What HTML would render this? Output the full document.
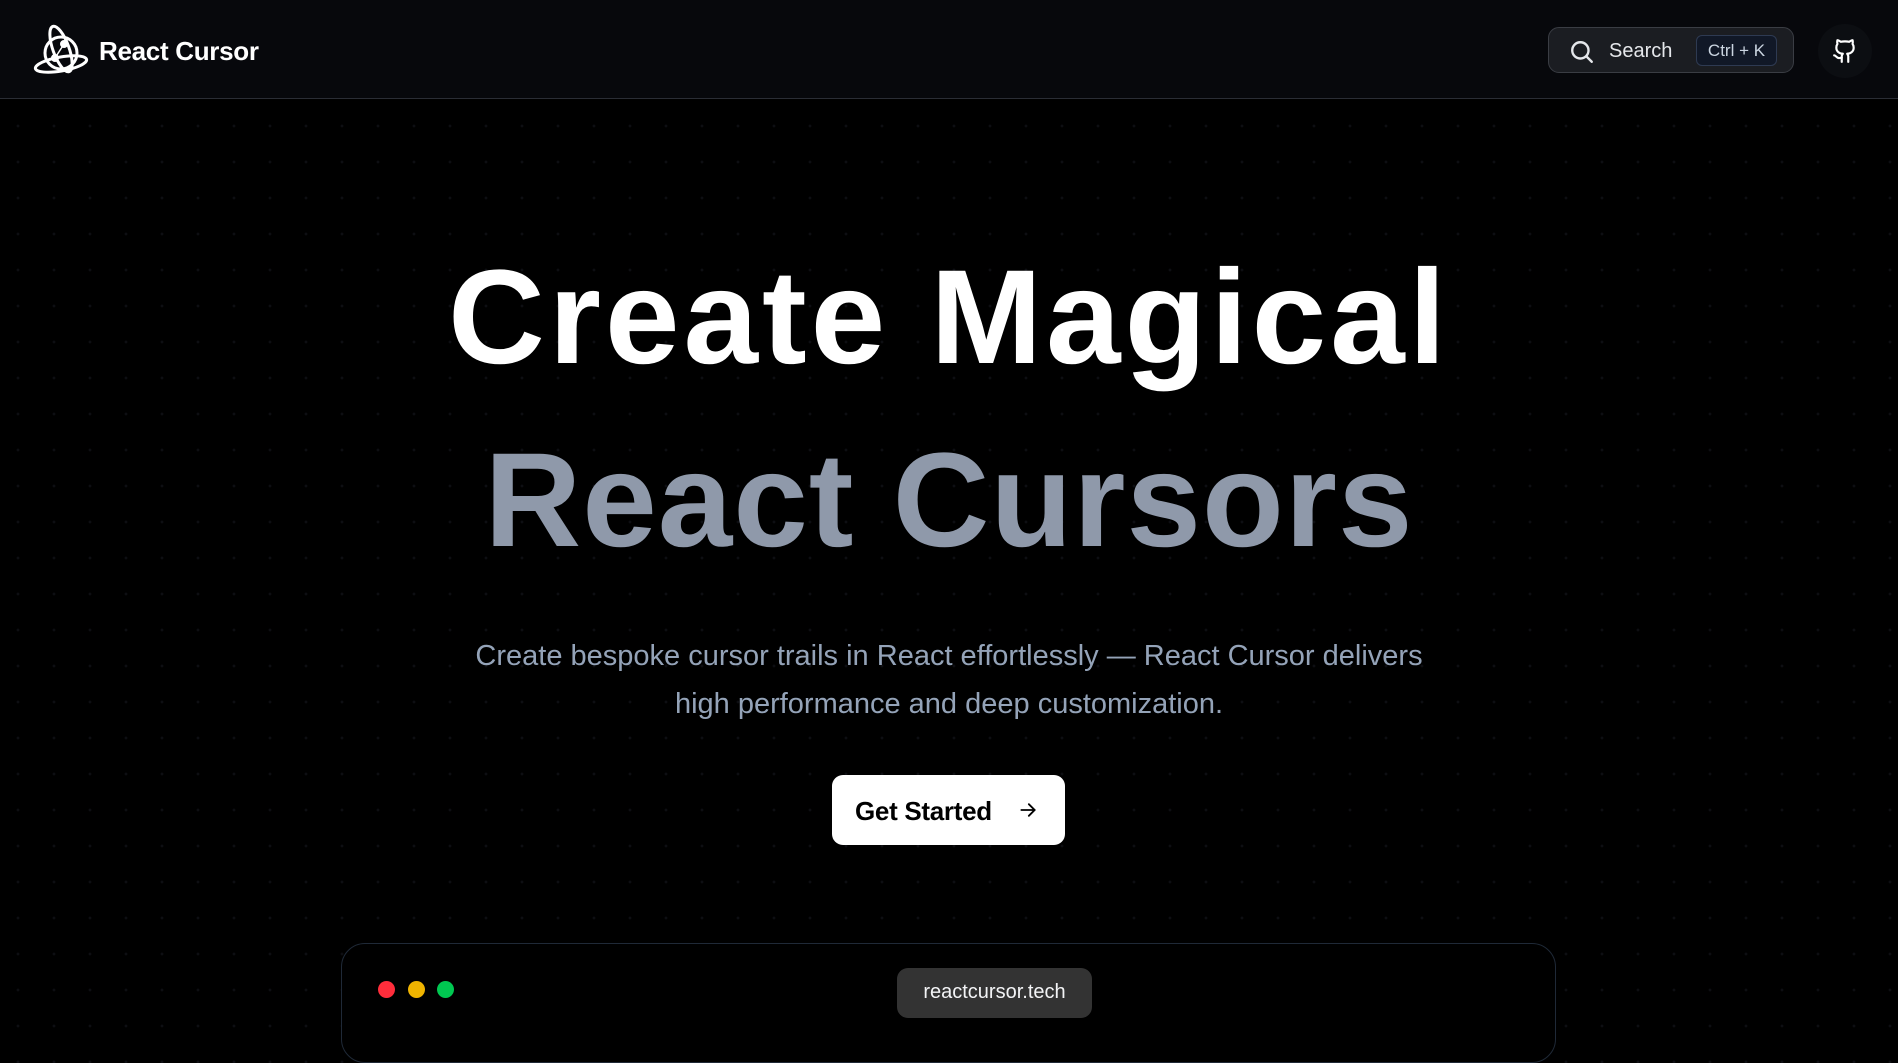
<!DOCTYPE html>
<html><head><meta charset="utf-8"><style>
*{margin:0;padding:0;box-sizing:border-box}
body{width:1898px;height:1002px;overflow:hidden;background:#000;font-family:"Liberation Sans",sans-serif;color:#fff;position:relative;
background-image:radial-gradient(circle,#0d0e12 1.2px,transparent 1.6px);background-size:36px 36px}
.hdr{position:absolute;left:0;top:0;width:1898px;height:99px;background:#07080c;border-bottom:1px solid #2a2d35}
.logo{position:absolute;left:33px;top:22px}
.brand{position:absolute;left:99px;top:36px;font-size:26px;font-weight:bold;letter-spacing:-0.3px}
.search{position:absolute;left:1548px;top:27px;width:246px;height:46px;border:1px solid #3a3d44;border-radius:11px;background:#1b1d22}
.search span.t{position:absolute;left:60px;top:12px;font-size:20px;color:#e5e7eb}
.kbd{position:absolute;left:147px;top:7px;width:81px;height:31px;border:1px solid #2e3a52;background:#111827;border-radius:6px;font-size:17px;color:#cbd5e1;text-align:center;line-height:29px}
.gh{position:absolute;left:1818px;top:24px;width:54px;height:54px;border-radius:50%;background:#0c0e12}
h1{position:absolute;left:0;width:1898px;text-align:center;font-weight:bold}
.l1{top:238px;font-size:134px;line-height:160px;color:#fff;letter-spacing:4px}
.l2{top:421px;font-size:134px;line-height:160px;color:#8f99aa;letter-spacing:1px}
.sub{position:absolute;left:0;width:1898px;text-align:center;top:632px;font-size:29px;line-height:48px;color:#94a3b8}
.btn{position:absolute;left:832px;top:775px;width:233px;height:70px;background:#fff;border-radius:11px;color:#000;font-size:26px;font-weight:bold}
.btn span{position:absolute;left:23px;top:21px;letter-spacing:-0.3px}
.card{position:absolute;left:341px;top:943px;width:1215px;height:120px;border:1px solid #1f2937;border-radius:24px;background:#000}
.dot{position:absolute;top:37px;width:17px;height:17px;border-radius:50%}
.pill{position:absolute;left:555px;top:24px;width:195px;height:50px;background:#333;border-radius:11px;font-size:20px;text-align:center;line-height:48px;color:#f3f4f6}
</style></head><body>
<div class="hdr">
 <svg class="logo" width="56" height="54" viewBox="0 0 56 54" fill="none" stroke="#fff" stroke-width="3">
  <circle cx="28" cy="31" r="16"/>
  <ellipse cx="28" cy="27" rx="8" ry="24" transform="rotate(-20 28 27)"/>
  <ellipse cx="28" cy="42" rx="26" ry="7" transform="rotate(-10 28 42)"/>
  <circle cx="31" cy="22" r="2.5" fill="#fff"/><circle cx="22" cy="36" r="2.5" fill="#fff"/>
  <path d="M22 36l9-14" stroke-width="1.5"/>
 </svg>
 <div class="brand">React Cursor</div>
 <div class="search">
  <svg style="position:absolute;left:20px;top:11px" width="26" height="26" viewBox="0 0 24 24" fill="none" stroke="#e5e7eb" stroke-width="2.2" stroke-linecap="round"><circle cx="10.5" cy="10.5" r="7.5"/><path d="M16 16l5 5"/></svg>
  <span class="t">Search</span><div class="kbd">Ctrl + K</div>
 </div>
 <div class="gh"><svg style="position:absolute;left:14px;top:14px" width="26" height="26" viewBox="0 0 24 24" fill="none" stroke="#fff" stroke-width="2" stroke-linecap="round" stroke-linejoin="round"><path d="M15 22v-4a4.8 4.8 0 0 0-1-3.5c3 0 6-2 6-5.5.08-1.25-.27-2.48-1-3.5.28-1.15.28-2.35 0-3.5 0 0-1 0-3 1.5-2.64-.5-5.36-.5-8 0C6 2 5 2 5 2c-.3 1.15-.3 2.35 0 3.5A5.4 5.4 0 0 0 4 9c0 3.5 3 5.5 6 5.5-.39.49-.68 1.05-.85 1.65-.17.6-.22 1.23-.15 1.85v4"/><path d="M9 18c-4.51 2-5-2-7-2"/></svg></div>
</div>
<h1 class="l1">Create Magical</h1>
<h1 class="l2">React Cursors</h1>
<div class="sub">Create bespoke cursor trails in React effortlessly — React Cursor delivers<br>high performance and deep customization.</div>
<div class="btn"><span>Get Started</span>
 <svg style="position:absolute;left:186px;top:25px" width="20" height="20" viewBox="0 0 24 24" fill="none" stroke="#000" stroke-width="2.2" stroke-linecap="round"><path d="M4 12h16M13 5l7 7-7 7"/></svg></div>
<div class="card">
 <div class="dot" style="left:36px;background:#ff2d3b"></div>
 <div class="dot" style="left:66px;background:#f0b400"></div>
 <div class="dot" style="left:95px;background:#00c851"></div>
 <div class="pill">reactcursor.tech</div>
</div>
</body></html>
